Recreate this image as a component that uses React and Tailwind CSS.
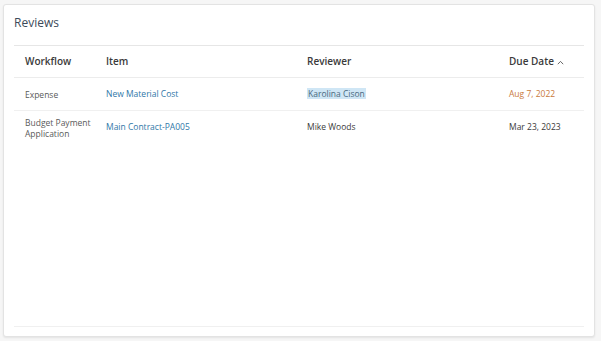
export default function App() {
  const rows = [
    {
      workflow: "Expense",
      item: "New Material Cost",
      reviewer: "Karolina Cison",
      highlight: true,
      due: "Aug 7, 2022",
      overdue: true,
    },
    {
      workflow: "Budget Payment Application",
      item: "Main Contract-PA005",
      reviewer: "Mike Woods",
      due: "Mar 23, 2023",
    },
  ];

  return (
    <div
      className="w-[601px] h-[341px] bg-[#f6f6f6] pt-[4px] pl-[3px] pr-[6px] pb-[4px]"
      style={{ fontFamily: '"Open Sans", "Noto Sans", sans-serif' }}
    >
      <div className="h-full bg-white border border-[#e3e3e3] rounded-[3px] shadow-[0_1px_2px_rgba(0,0,0,0.08)] flex flex-col px-[10px]">
        {/* Title */}
        <h2 className="pt-[9px] h-[40px] text-[12px] text-[#3c4a5a]">Reviews</h2>

        {/* Table */}
        <div className="flex-1 flex flex-col border-t border-[#e6e6e6]">
          <div className="grid grid-cols-[81px_201px_202px_1fr] h-[32px] items-center border-b border-[#ececec] text-[10px] font-semibold text-[#3a3a3a]">
            <div className="pl-[11px]">Workflow</div>
            <div className="pl-[11px]">Item</div>
            <div className="pl-[11px]">Reviewer</div>
            <div className="pl-[11px] flex items-center gap-[3px]">
              Due Date
              <svg width="7" height="5" viewBox="0 0 7 5" className="mt-[1px]">
                <path d="M0.8 4.2 L3.5 1.4 L6.2 4.2" fill="none" stroke="#555" strokeWidth="0.9" />
              </svg>
            </div>
          </div>

          {rows.map((r, i) => (
            <div
              key={r.item}
              className={
                "grid grid-cols-[81px_201px_202px_1fr] min-h-[33px] py-[5px] items-center text-[8.5px] text-[#3a3a3a] " +
                (i < rows.length - 1 ? "border-b border-[#f0f0f0]" : "")
              }
            >
              <div className="pl-[11px] pr-[4px] leading-[11px] text-[#5a5a5a]">{r.workflow}</div>
              <div className="pl-[11px] text-[#2f77a8]">{r.item}</div>
              <div className="pl-[11px]">
                <span className={r.highlight ? "bg-[#cfe6f5] text-[#4a6a80] px-[1px]" : ""}>{r.reviewer}</span>
              </div>
              <div className={r.overdue ? "pl-[11px] text-[#c97a3c]" : "pl-[11px]"}>{r.due}</div>
            </div>
          ))}

          <div className="flex-1" />
          <div className="border-t border-[#f0f0f0] h-[10px]" />
        </div>
      </div>
    </div>
  );
}
